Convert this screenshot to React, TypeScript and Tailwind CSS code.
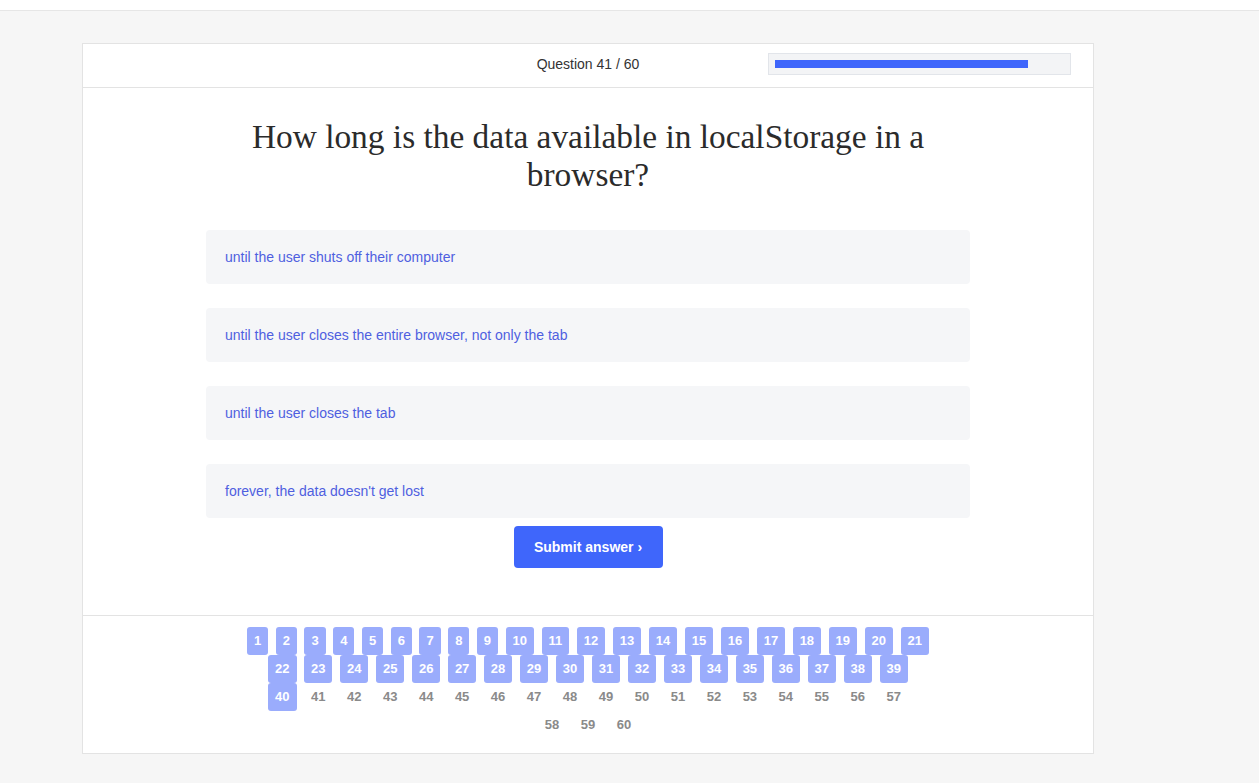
import React from 'react';

const options = [
  'until the user shuts off their computer',
  'until the user closes the entire browser, not only the tab',
  'until the user closes the tab',
  "forever, the data doesn't get lost",
];

const rows: number[][] = [
  Array.from({ length: 21 }, (_, i) => i + 1),
  Array.from({ length: 18 }, (_, i) => i + 22),
  Array.from({ length: 18 }, (_, i) => i + 40),
  [58, 59, 60],
];

const current = 41;

const NumberItem: React.FC<{ n: number }> = ({ n }) =>
  n < current ? (
    <span className="h-[28px] px-[7px] rounded-[3px] bg-[#9aacfc] text-white font-bold text-[13px] leading-[28px]">
      {n}
    </span>
  ) : (
    <span className="h-[27px] px-[7px] text-[#8a8a8a] font-bold text-[13px] leading-[27px]">{n}</span>
  );

export default function App() {
  return (
    <div className="min-h-[783px] bg-[#f6f6f6] font-['Liberation_Sans',Arial,sans-serif]">
      <div className="h-[11px] bg-white border-b border-[#e6e6e6]" />
      <div className="w-[1012px] ml-[82px] mt-[32px] bg-white border border-[#e3e3e3]">
        <div className="grid grid-cols-[1fr_auto_1fr] items-center h-[44px] pb-[3px] border-b border-[#e3e3e3]">
          <div />
          <div className="text-[14px] text-[#333]">Question 41 / 60</div>
          <div className="flex justify-end pr-[22px]">
            <div className="w-[303px] h-[22px] bg-[#f3f4f6] border border-[#e2e5ea] px-[6px] flex items-center">
              <div className="w-[253px] h-[8px] bg-[#3f66fb]" />
            </div>
          </div>
        </div>

        <div className="flex flex-col items-center pt-[30px]">
          <h1 className="text-center text-[33.4px] leading-[38px] text-[#2b2b2b] font-['Liberation_Serif',Georgia,serif]">
            How long is the data available in localStorage in a
            <br />
            browser?
          </h1>

          <div className="w-[764px] mt-[36px] flex flex-col gap-[24px]">
            {options.map((o) => (
              <div
                key={o}
                className="h-[54px] rounded-[4px] bg-[#f5f6f8] px-[19px] flex items-center text-[14px] text-[#4f5fe0] cursor-pointer"
              >
                {o}
              </div>
            ))}
          </div>

          <button className="mt-[8px] w-[149px] h-[42px] rounded-[4px] bg-[#3f66fb] text-white font-bold text-[14px]">
            Submit answer ›
          </button>
        </div>

        <div className="mt-[47px] border-t border-[#e3e3e3] pt-[11px] pb-[15px] flex flex-col items-center">
          {rows.map((r, i) => (
            <div key={i} className="flex justify-center gap-x-[7.5px]">
              {r.map((n) => (
                <NumberItem key={n} n={n} />
              ))}
            </div>
          ))}
        </div>
      </div>
    </div>
  );
}
